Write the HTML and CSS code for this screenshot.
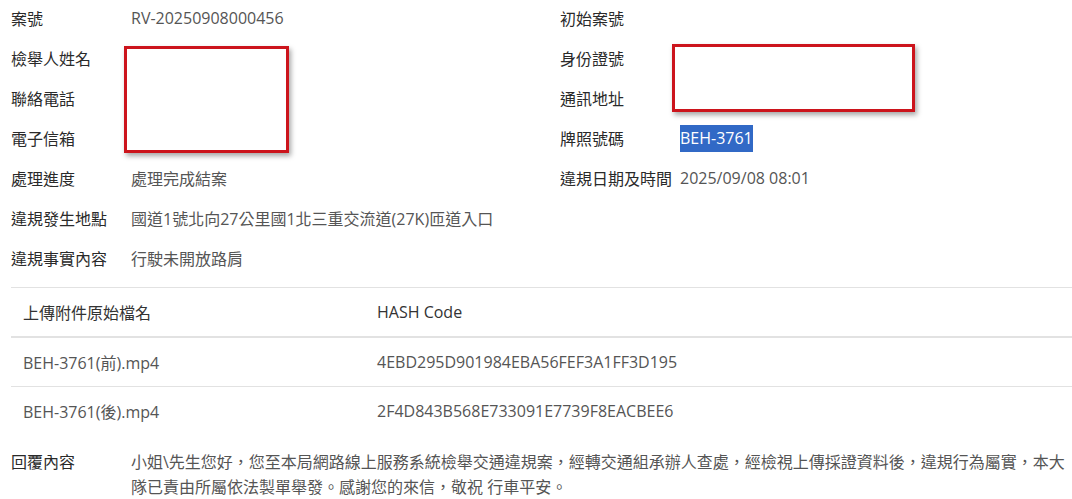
FILE: index.html
```html
<!DOCTYPE html>
<html lang="zh-Hant">
<head>
<meta charset="utf-8">
<link rel="stylesheet" href="styles.css">
</head>
<body>
<div class="page">
  <div class="info">
    <div class="label">案號</div><div class="value">RV-20250908000456</div>
    <div class="label">初始案號</div><div class="value"></div>
    <div class="label">檢舉人姓名</div><div class="value"></div>
    <div class="label">身份證號</div><div class="value"></div>
    <div class="label">聯絡電話</div><div class="value"></div>
    <div class="label">通訊地址</div><div class="value"></div>
    <div class="label">電子信箱</div><div class="value"></div>
    <div class="label">牌照號碼</div><div class="value"><span class="selected">BEH-3761</span></div>
    <div class="label">處理進度</div><div class="value">處理完成結案</div>
    <div class="label">違規日期及時間</div><div class="value">2025/09/08 08:01</div>
    <div class="label">違規發生地點</div><div class="value wide">國道1號北向27公里國1北三重交流道(27K)匝道入口</div>
    <div class="label">違規事實內容</div><div class="value wide">行駛未開放路肩</div>
  </div>

  <table class="files">
    <thead>
      <tr><th class="col-name">上傳附件原始檔名</th><th>HASH Code</th></tr>
    </thead>
    <tbody>
      <tr><td>BEH-3761(前).mp4</td><td>4EBD295D901984EBA56FEF3A1FF3D195</td></tr>
      <tr><td>BEH-3761(後).mp4</td><td>2F4D843B568E733091E7739F8EACBEE6</td></tr>
    </tbody>
  </table>

  <div class="reply">
    <div class="label">回覆內容</div>
    <div class="reply-text">小姐\先生您好，您至本局網路線上服務系統檢舉交通違規案，經轉交通組承辦人查處，經檢視上傳採證資料後，違規行為屬實，本大隊已責由所屬依法製單舉發。感謝您的來信，敬祝 行車平安。</div>
  </div>
</div>
<div class="redact redact-left"></div>
<div class="redact redact-right"></div>
</body>
</html>
```

FILE: styles.css
```css
html, body {
  margin: 0;
  padding: 0;
  background: #fff;
}
body {
  font-family: "Open Sans", "Noto Sans CJK TC", sans-serif;
  font-size: 16px;
  color: #333;
  width: 1072px;
  height: 499px;
  overflow: hidden;
  position: relative;
}
.page {
  padding-left: 11px;
}
.info {
  display: grid;
  grid-template-columns: 120px 429px 120px 1fr;
  grid-auto-rows: 40px;
  align-items: center;
  margin-top: -2px;
}
.label {
  color: #2a2a2a;
  white-space: nowrap;
}
.value {
  color: #555;
  white-space: nowrap;
}
.value.wide {
  grid-column: 2 / 5;
}
.selected {
  background: #3169c6;
  color: #fff;
  padding: 2px 0 3px 0;
}
.files {
  width: 1061px;
  border-collapse: collapse;
  margin-top: 9px;
}
.files th, .files td {
  text-align: left;
  padding: 0 12px;
  font-weight: normal;
}
.files th {
  height: 48px;
  color: #333;
  border-top: 1px solid #e2e2e2;
  border-bottom: 2px solid #e2e2e2;
}
.files td {
  height: 48px;
  color: #555;
  border-bottom: 1px solid #e2e2e2;
}
.files tbody tr:last-child td {
  border-bottom: none;
}
.col-name {
  width: 330px;
}
.reply {
  display: grid;
  grid-template-columns: 120px 1fr;
  margin-top: 15px;
  line-height: 25px;
}
.reply-text {
  color: #555;
}
.redact {
  position: absolute;
  border: 3px solid #cc141c;
  box-shadow: 2px 3px 5px rgba(0, 0, 0, 0.35);
  background: #fff;
  box-sizing: border-box;
}
.redact-left {
  left: 124px;
  top: 46px;
  width: 165px;
  height: 107px;
}
.redact-right {
  left: 672px;
  top: 44px;
  width: 243px;
  height: 68px;
}
```
